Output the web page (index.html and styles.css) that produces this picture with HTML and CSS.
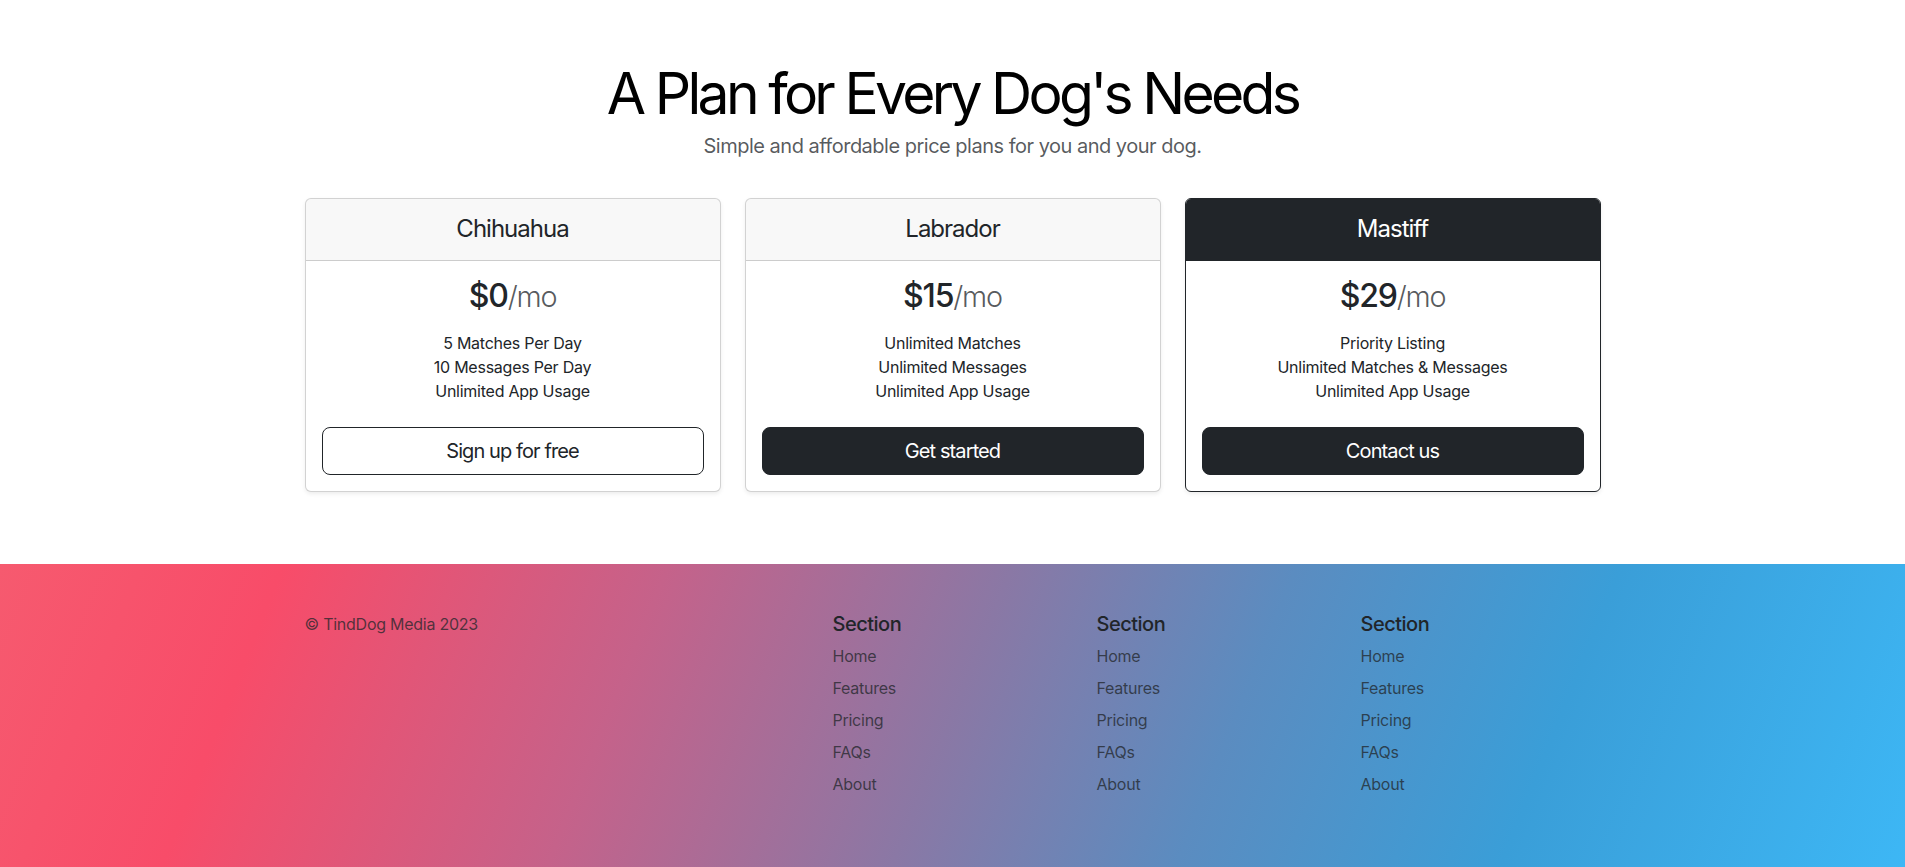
FILE: index.html
```html
<!DOCTYPE html>
<html lang="en">
<head>
<meta charset="utf-8">
<title>TindDog Pricing</title>
<link rel="stylesheet" href="styles.css">
</head>
<body>
<main class="pricing">
  <div class="container">
    <header class="pricing-header">
      <h1 class="title">A Plan for Every Dog's Needs</h1>
      <p class="subtitle">Simple and affordable price plans for you and your dog.</p>
    </header>
    <div class="cards">
      <div class="card">
        <div class="card-header"><h4 class="plan-name">Chihuahua</h4></div>
        <div class="card-body">
          <h1 class="price">$0<small class="per">/mo</small></h1>
          <ul class="features">
            <li>5 Matches Per Day</li>
            <li>10 Messages Per Day</li>
            <li>Unlimited App Usage</li>
          </ul>
          <button class="btn btn-outline" type="button">Sign up for free</button>
        </div>
      </div>
      <div class="card">
        <div class="card-header"><h4 class="plan-name">Labrador</h4></div>
        <div class="card-body">
          <h1 class="price">$15<small class="per">/mo</small></h1>
          <ul class="features">
            <li>Unlimited Matches</li>
            <li>Unlimited Messages</li>
            <li>Unlimited App Usage</li>
          </ul>
          <button class="btn btn-dark" type="button">Get started</button>
        </div>
      </div>
      <div class="card card-featured">
        <div class="card-header"><h4 class="plan-name">Mastiff</h4></div>
        <div class="card-body">
          <h1 class="price">$29<small class="per">/mo</small></h1>
          <ul class="features">
            <li>Priority Listing</li>
            <li>Unlimited Matches &amp; Messages</li>
            <li>Unlimited App Usage</li>
          </ul>
          <button class="btn btn-dark" type="button">Contact us</button>
        </div>
      </div>
    </div>
  </div>
</main>
<footer class="footer">
  <div class="footer-grid">
    <div class="footer-col">
      <small class="copyright">© TindDog Media 2023</small>
    </div>
    <div class="footer-col footer-first">
      <h5 class="footer-title">Section</h5>
      <ul class="footer-links">
        <li><a href="#">Home</a></li>
        <li><a href="#">Features</a></li>
        <li><a href="#">Pricing</a></li>
        <li><a href="#">FAQs</a></li>
        <li><a href="#">About</a></li>
      </ul>
    </div>
    <div class="footer-col">
      <h5 class="footer-title">Section</h5>
      <ul class="footer-links">
        <li><a href="#">Home</a></li>
        <li><a href="#">Features</a></li>
        <li><a href="#">Pricing</a></li>
        <li><a href="#">FAQs</a></li>
        <li><a href="#">About</a></li>
      </ul>
    </div>
    <div class="footer-col">
      <h5 class="footer-title">Section</h5>
      <ul class="footer-links">
        <li><a href="#">Home</a></li>
        <li><a href="#">Features</a></li>
        <li><a href="#">Pricing</a></li>
        <li><a href="#">FAQs</a></li>
        <li><a href="#">About</a></li>
      </ul>
    </div>
  </div>
</footer>
</body>
</html>
```
FILE: styles.css
```css
* { box-sizing: border-box; }

html, body {
  margin: 0;
  padding: 0;
}

body {
  font-family: Inter, "Noto Sans", "Liberation Sans", sans-serif;
  font-size: 16px;
  line-height: 1.5;
  letter-spacing: -0.25px;
  color: #212529;
  background: #fff;
}

.container {
  width: 1320px;
  margin: 0 auto;
  padding: 0 12px;
}

.pricing {
  padding-bottom: 72px;
}

.pricing-header {
  padding-top: 60px;
  text-align: center;
}

.title {
  margin: 0 0 4px;
  font-size: 57px;
  font-weight: 400;
  line-height: 1.18;
  letter-spacing: -0.065em;
  color: #000;
}

.subtitle {
  margin: 0 0 37px;
  font-size: 20px;
  line-height: 1.5;
  letter-spacing: -0.5px;
  color: rgba(33, 37, 41, 0.75);
}

.cards {
  display: grid;
  grid-template-columns: repeat(3, 1fr);
  gap: 24px;
}

.card {
  border: 1px solid rgba(0, 0, 0, 0.175);
  border-radius: 6px;
  box-shadow: 0 2px 4px rgba(0, 0, 0, 0.075);
  background: #fff;
  overflow: hidden;
}

.card-header {
  padding: 16px;
  background: rgba(33, 37, 41, 0.03);
  border-bottom: 1px solid rgba(0, 0, 0, 0.175);
  text-align: center;
}

.plan-name {
  margin: 0;
  font-size: 24px;
  font-weight: 400;
  line-height: 1.2;
  letter-spacing: -1px;
}

.card-featured {
  border-color: #212529;
}

.card-featured .card-header {
  background: #212529;
  border-bottom-color: #212529;
  color: #fff;
}

.card-body {
  padding: 16px;
  text-align: center;
}

.price {
  margin: 0 0 16px;
  font-size: 32px;
  font-weight: 500;
  line-height: 1.2;
  letter-spacing: -1.2px;
}

.per {
  font-size: 0.9em;
  font-weight: 300;
  color: rgba(33, 37, 41, 0.75);
}

.features {
  list-style: none;
  margin: 0 0 24px;
  padding: 0;
  font-size: 16px;
  line-height: 24px;
}

.btn {
  display: block;
  width: 100%;
  padding: 8px 16px;
  font-family: inherit;
  font-size: 20px;
  line-height: 1.5;
  letter-spacing: -0.9px;
  border-radius: 8px;
  border: 1px solid #212529;
  cursor: pointer;
}

.btn-outline {
  background: transparent;
  color: #212529;
}

.btn-dark {
  background: #212529;
  color: #fff;
}

.footer {
  padding: 48px 0 64px;
  background: linear-gradient(112deg, #f65a6f 0%, #f84c69 14%, #c5628a 33%, #8a78a5 50%, #5b8cc0 64%, #3a9ed8 80%, #3db7f5 100%);
}

.footer-grid {
  width: 1320px;
  margin: 0 auto;
  display: grid;
  grid-template-columns: repeat(5, 1fr);
}

.footer-col {
  padding: 0 12px;
}

.footer-first {
  grid-column: 3;
}

.copyright {
  display: block;
  font-size: 16px;
  line-height: 24px;
  color: rgba(33, 37, 41, 0.75);
}

.footer-title {
  margin: 0 0 8px;
  font-size: 20px;
  font-weight: 500;
  line-height: 1.2;
  letter-spacing: -0.5px;
  color: #212529;
}

.footer-links {
  list-style: none;
  margin: 0;
  padding: 0;
}

.footer-links li {
  margin-bottom: 8px;
  line-height: 24px;
}

.footer-links a {
  color: rgba(33, 37, 41, 0.75);
  text-decoration: none;
}
```
